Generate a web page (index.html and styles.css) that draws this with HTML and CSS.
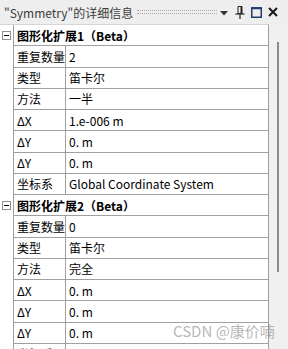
FILE: index.html
```html
<!DOCTYPE html>
<html lang="zh">

<head>
    <meta charset="UTF-8">
    <meta name="viewport" content="width=device-width, initial-scale=1.0">
    <link rel="stylesheet" href="styles.css">
</head>

<body>
    <div class="panel">
        <div class="titlebar">
            <span class="title">"Symmetry"的详细信息</span>
            <span class="grip"></span>
            <svg class="tb-icon drop" width="8" height="5" viewBox="0 0 8 5"><path d="M0 0h8L4 4.5z" fill="#333"/></svg>
            <svg class="tb-icon pin" width="10" height="13" viewBox="0 0 10 13">
                <path d="M3 0.5h4v7H3z" fill="none" stroke="#222" stroke-width="1"/>
                <path d="M5.5 1h1.5v6.5h-1.5z" fill="#222"/>
                <path d="M0.5 8h9" stroke="#222" stroke-width="1.2"/>
                <path d="M5 8.5v4.5" stroke="#222" stroke-width="1.2"/>
            </svg>
            <svg class="tb-icon max" width="11" height="11" viewBox="0 0 11 11">
                <rect x="0.75" y="1" width="9.5" height="9.25" fill="none" stroke="#1c3d6e" stroke-width="1.5"/>
                <path d="M0 1.25h11" stroke="#1c3d6e" stroke-width="2"/>
            </svg>
            <svg class="tb-icon close" width="10" height="10" viewBox="0 0 10 10">
                <path d="M1 1l8 8M9 1l-8 8" stroke="#1a1a1a" stroke-width="2"/>
            </svg>
        </div>

        <div class="content">
            <div class="grid">
                <div class="exp"><span class="toggle"></span></div>
                <div class="group">图形化扩展1（Beta）</div>
                <div class="exp"></div><div class="name">重复数量</div><div class="val">2</div>
                <div class="exp"></div><div class="name">类型</div><div class="val">笛卡尔</div>
                <div class="exp"></div><div class="name">方法</div><div class="val">一半</div>
                <div class="exp"></div><div class="name">ΔX</div><div class="val">1.e-006 m</div>
                <div class="exp"></div><div class="name">ΔY</div><div class="val">0. m</div>
                <div class="exp"></div><div class="name">ΔY</div><div class="val">0. m</div>
                <div class="exp"></div><div class="name">坐标系</div><div class="val">Global Coordinate System</div>

                <div class="exp"><span class="toggle"></span></div>
                <div class="group">图形化扩展2（Beta）</div>
                <div class="exp"></div><div class="name">重复数量</div><div class="val">0</div>
                <div class="exp"></div><div class="name">类型</div><div class="val">笛卡尔</div>
                <div class="exp"></div><div class="name">方法</div><div class="val">完全</div>
                <div class="exp"></div><div class="name">ΔX</div><div class="val">0. m</div>
                <div class="exp"></div><div class="name">ΔY</div><div class="val">0. m</div>
                <div class="exp"></div><div class="name">ΔY</div><div class="val">0. m</div>
                <div class="exp"></div><div class="name">坐标系</div><div class="val">Global Coordinate System</div>
            </div>
            <div class="scrollbar"><div class="thumb"></div></div>
        </div>

        <div class="watermark">CSDN @康价喃</div>
    </div>
</body>

</html>
```

FILE: styles.css
```css
:root {
    --bar-bg: #eeeeef;
    --line: #a0a0a0;
    --text: #000000;
}

body {
    margin: 0;
    padding: 0;
    font-family: "Noto Sans CJK SC", "Noto Sans", sans-serif;
    font-size: 12px;
    color: var(--text);
    background: #ffffff;
}

.panel {
    position: relative;
    width: 288px;
    height: 349px;
    overflow: hidden;
    background: var(--bar-bg);
}

.titlebar {
    height: 24px;
    display: flex;
    align-items: center;
    padding-left: 4px;
    box-sizing: border-box;
}

.title {
    color: #3c3c3c;
    font-size: 12px;
    white-space: nowrap;
}

.grip {
    flex: 1;
    height: 2px;
    margin: 0 3px 0 4px;
    border-top: 1px dotted #a8a8a8;
    border-bottom: 1px dotted #a8a8a8;
}

.tb-icon {
    display: block;
    flex: none;
}

.drop {
    margin-right: 7px;
    margin-top: 2px;
}

.pin {
    margin-right: 6px;
}

.max {
    margin-right: 6px;
}

.close {
    margin-right: 10px;
}

.content {
    display: flex;
    height: 325px;
    overflow: hidden;
}

.grid {
    width: 269px;
    box-sizing: border-box;
    display: grid;
    grid-template-columns: 14px 52px 1fr;
    grid-auto-rows: 21.25px;
    border-right: 1px solid var(--line);
    border-top: 1px solid #d6d6d6;
    background: #ffffff;
    align-content: start;
}

.exp {
    border-right: 1px solid var(--line);
    position: relative;
}

.toggle {
    position: absolute;
    left: 2px;
    top: 6px;
    width: 9px;
    height: 9px;
    box-sizing: border-box;
    border: 1px solid #909090;
    background: #ffffff;
}

.toggle::after {
    content: "";
    position: absolute;
    left: 1px;
    top: 3px;
    width: 5px;
    height: 1px;
    background: #000000;
}

.group,
.name,
.val {
    border-bottom: 1px solid var(--line);
    display: flex;
    align-items: center;
    white-space: nowrap;
    overflow: hidden;
}

.group {
    grid-column: 2 / 4;
    padding-left: 3px;
    font-weight: bold;
}

.name {
    border-right: 1px solid var(--line);
    padding-left: 3px;
}

.val {
    padding-left: 3px;
}

.scrollbar {
    flex: 1;
    background: #f0f0f0;
    position: relative;
}

.thumb {
    margin: 18px 0 0 8px;
    width: 2px;
    height: 230px;
    background: #8a8a8a;
}

.watermark {
    position: absolute;
    left: 173px;
    top: 320px;
    font-size: 15px;
    color: rgba(120, 120, 120, 0.55);
    white-space: nowrap;
}
```
